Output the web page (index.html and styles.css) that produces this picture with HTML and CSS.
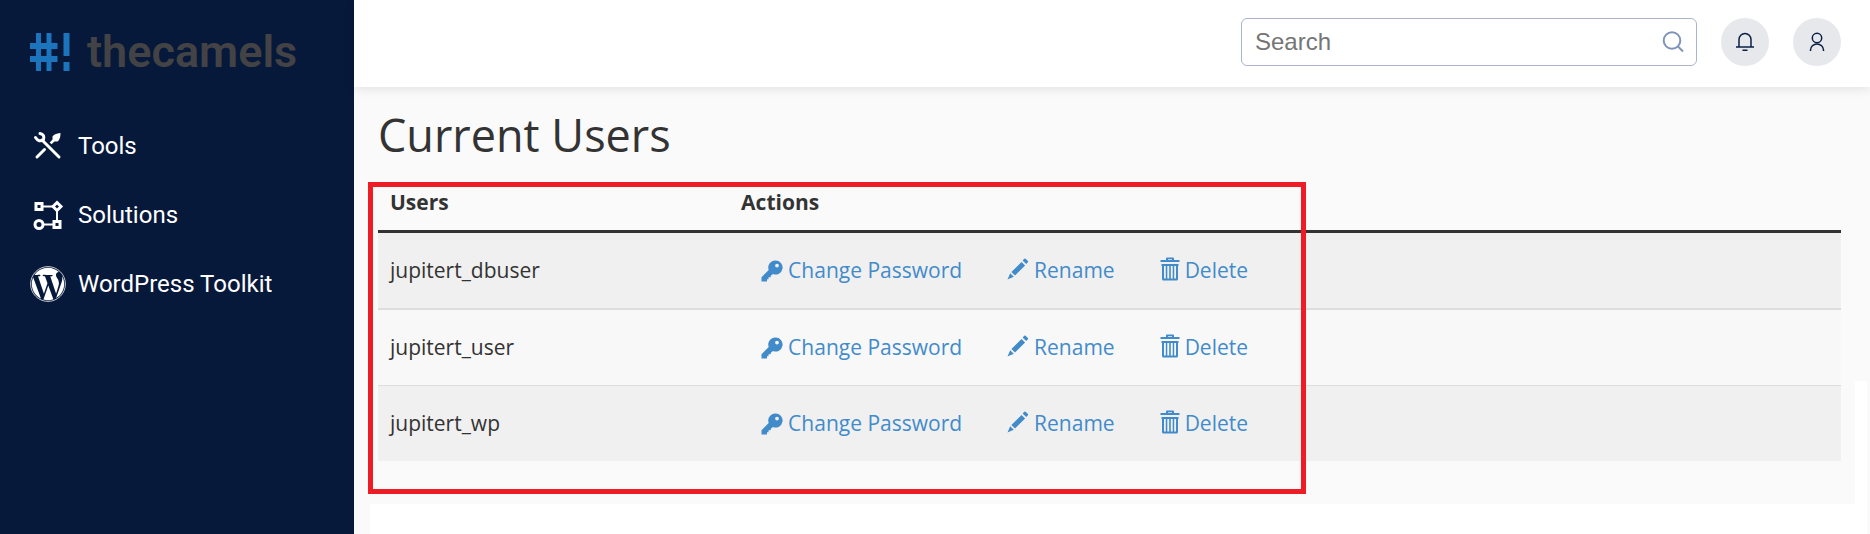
FILE: index.html
```html
<!DOCTYPE html>
<html lang="en">
<head>
<meta charset="utf-8">
<title>Current Users</title>
<link rel="stylesheet" href="styles.css">
</head>
<body>
<svg class="sprite" aria-hidden="true">
  <symbol id="key" viewBox="0 0 22 22">
    <path fill-rule="evenodd" d="M14.500 .5a7 7 0 1 1-2.500 13.500l-2 1.500-.5 1.800H7.500v2H6v2.200H.5v-4.300L7.700 10a7 7 0 0 1 6.800-9.500zM16 3.700a1.900 1.900 0 1 0 0 3.800a1.900 1.900 0 0 0 0-3.800z"/>
  </symbol>
  <symbol id="pencil" viewBox="0 0 22 22">
    <path d="M17.300.8q.7-.5 1.300 0l2.300 2.300q.5.600 0 1.200l-1.700 1.700-3.600-3.600zM14.500 3.900l3.600 3.600L8 17.600l-3.600-3.600zM3.200 15.200l3.600 3.600L.5 21.500z"/>
  </symbol>
  <symbol id="trash" viewBox="0 0 20 24">
    <path fill-rule="evenodd" d="M6 3V1.500Q6 .5 7 .5h6q1 0 1 1V3h5.500v2H.5V3zM8 3h4v-.800H8zM1.500 7h17v2H18v13q0 1.500-1.500 1.500h-13Q2 23.500 2 22V9h-.5zM4 9v12.500h1.800V9zm3.300 0v12.500h1.900V9zm3.500 0v12.500h1.900V9zm3.400 0v12.500H16V9z"/>
  </symbol>
</svg>
<div class="app">
  <aside class="sidebar">
    <a class="brand" href="#" aria-label="thecamels">
      <svg class="brand-mark" viewBox="0 0 40 38" aria-hidden="true"><path d="M6 0h5v38H6zM16.500 0h5v38h-5zM0 10h27.500v6H0zM0 23h27.500v6H0zM33.500 0h6v23h-6zM33.500 29h6v9h-6z"/></svg>
      <span class="brand-name">thecamels</span>
    </a>
    <nav class="menu">
      <a class="menu-item" href="#">
        <svg class="menu-icon" viewBox="0 0 36 36" aria-hidden="true">
          <path d="M12 12L29 29" stroke="#fff" stroke-width="3" stroke-linecap="round"/>
          <path d="M14.500 21.500L7 29" stroke="#fff" stroke-width="3" stroke-linecap="round"/>
          <path d="M10 5.500Q15 6.500 13.500 11.500Q9 15 5.500 9.500" fill="none" stroke="#fff" stroke-width="3" stroke-linecap="round"/>
          <path d="M30.500 5Q24 5.500 22.500 8.500v3l-2.800 3 1.800 1.800 3-2.800h3Q30.500 11.500 30.500 5z" fill="#fff"/>
        </svg>
        <span>Tools</span>
      </a>
      <a class="menu-item" href="#">
        <svg class="menu-icon" viewBox="0 0 36 36" fill="none" stroke="#fff" stroke-width="3" aria-hidden="true">
          <path d="M13 9.500h10M27 13v10M14 27.500h9" stroke-width="2"/>
          <path d="M6 6.500h6v6H6zM24 24.500h6v6h-6zM27 5.500l4 4-4 4-4-4z"/>
          <circle cx="9" cy="27.500" r="4"/>
        </svg>
        <span>Solutions</span>
      </a>
      <a class="menu-item" href="#">
        <svg class="menu-icon" viewBox="0 0 24 24" fill="#fff" aria-hidden="true">
          <circle cx="12" cy="12" r="11.600" fill="none" stroke="#fff" stroke-width=".5"/>
          <path d="M21.469 6.825c.84 1.537 1.318 3.300 1.318 5.175 0 3.979-2.156 7.456-5.363 9.325l3.295-9.527c.615-1.540.820-2.771.820-3.864 0-.405-.026-.780-.070-1.110m-7.981.105c.647-.030 1.232-.105 1.232-.105.582-.075.514-.930-.067-.899 0 0-1.755.135-2.880.135-1.064 0-2.850-.150-2.850-.150-.585-.030-.661.855-.075.885 0 0 .540.061 1.125.090l1.680 4.605-2.370 7.080L5.354 6.900c.649-.030 1.234-.100 1.234-.100.585-.075.516-.930-.065-.896 0 0-1.746.138-2.874.138-.200 0-.438-.008-.690-.015C4.911 3.150 8.235 1.215 12 1.215c2.809 0 5.365 1.072 7.286 2.833-.046-.003-.091-.009-.141-.009-1.060 0-1.812.923-1.812 1.914 0 .890.513 1.643 1.060 2.531.411.720.890 1.643.890 2.977 0 .915-.354 1.994-.821 3.479l-1.075 3.585-3.900-11.610zM12 22.784c-1.059 0-2.081-.153-3.048-.437l3.237-9.406 3.315 9.087c.024.053.050.101.078.149-1.120.393-2.325.609-3.582.609M1.211 12c0-1.564.336-3.050.935-4.390L7.290 21.709C3.694 19.960 1.212 16.271 1.211 12"/>
        </svg>
        <span>WordPress Toolkit</span>
      </a>
    </nav>
  </aside>
  <div class="page">
    <header class="topbar">
      <form class="search" role="search">
        <input class="search-input" type="search" placeholder="Search" aria-label="Search">
        <button class="search-button" type="submit" aria-label="Search">
          <svg class="search-icon" viewBox="0 0 22 22" aria-hidden="true"><circle cx="10" cy="9.500" r="8.300"/><path d="M16 15.500l5 5"/></svg>
        </button>
      </form>
      <button class="round-button" type="button" aria-label="Notifications">
        <svg class="round-icon" viewBox="0 0 20 20" aria-hidden="true"><path d="M4 15V7.500a6 6 0 0 1 12 0V15M1 15h18M7.500 18.300h5"/></svg>
      </button>
      <button class="round-button" type="button" aria-label="Account">
        <svg class="round-icon" viewBox="0 0 20 20" aria-hidden="true"><circle cx="10" cy="6" r="4.700"/><path d="M3.500 19v-1a6.500 6 0 0 1 13 0v1"/></svg>
      </button>
    </header>
    <main class="content">
      <h1 class="title">Current Users</h1>
      <div class="users">
        <table class="users-table">
          <thead>
            <tr><th class="col-user" scope="col">Users</th><th scope="col">Actions</th></tr>
          </thead>
          <tbody>
            <tr>
              <td>jupitert_dbuser</td>
              <td><div class="actions">
                <a class="action" href="#"><svg class="icon-key"><use href="#key"/></svg>Change Password</a>
                <a class="action" href="#"><svg class="icon-pencil"><use href="#pencil"/></svg>Rename</a>
                <a class="action" href="#"><svg class="icon-trash"><use href="#trash"/></svg>Delete</a>
              </div></td>
            </tr>
            <tr>
              <td>jupitert_user</td>
              <td><div class="actions">
                <a class="action" href="#"><svg class="icon-key"><use href="#key"/></svg>Change Password</a>
                <a class="action" href="#"><svg class="icon-pencil"><use href="#pencil"/></svg>Rename</a>
                <a class="action" href="#"><svg class="icon-trash"><use href="#trash"/></svg>Delete</a>
              </div></td>
            </tr>
            <tr>
              <td>jupitert_wp</td>
              <td><div class="actions">
                <a class="action" href="#"><svg class="icon-key"><use href="#key"/></svg>Change Password</a>
                <a class="action" href="#"><svg class="icon-pencil"><use href="#pencil"/></svg>Rename</a>
                <a class="action" href="#"><svg class="icon-trash"><use href="#trash"/></svg>Delete</a>
              </div></td>
            </tr>
          </tbody>
        </table>
        <div class="highlight"></div>
      </div>
    </main>
    <div class="blank"></div>
  </div>
</div>
</body>
</html>
```

FILE: styles.css
```css
* { box-sizing: border-box; }

body {
  margin: 0;
  background: #fafafa;
  color: #333;
  font: 400 21px/31px "Open Sans", "Noto Sans", sans-serif;
}

.sprite { position: absolute; width: 0; height: 0; }

.app { display: flex; min-height: 100vh; }

/* Sidebar */
.sidebar {
  flex: none;
  width: 354px;
  padding: 27px 30px;
  background: #06193b;
  font-family: Roboto, sans-serif;
}

.brand {
  display: flex;
  align-items: center;
  gap: 17px;
  height: 50px;
  color: #434345;
  text-decoration: none;
}
.brand-mark { width: 40px; height: 38px; fill: #1c75bc; }
.brand-name { font-size: 45px; font-weight: 600; line-height: 50px; }

.menu { display: grid; gap: 33px; margin-top: 51px; }
.menu-item {
  display: flex;
  align-items: center;
  gap: 12px;
  color: #fff;
  font-size: 24px;
  font-weight: 400;
  line-height: 36px;
  text-decoration: none;
}
.menu-icon { width: 36px; height: 36px; }

/* Top bar */
.page { display: flex; flex: 1; flex-direction: column; min-width: 0; }

.topbar {
  display: flex;
  justify-content: flex-end;
  gap: 24px;
  padding: 18px 29px 21px;
  background: #fff;
  box-shadow: 0 2px 10px rgba(0, 0, 0, 0.1);
}
.search {
  display: flex;
  align-items: center;
  width: 456px;
  height: 48px;
  border: 1px solid #aab4cc;
  border-radius: 6px;
  background: #fff;
}
.search-input {
  flex: 1;
  min-width: 0;
  padding: 0 13px;
  border: 0;
  background: none;
  font: 400 24px/30px "Liberation Sans", Arial, sans-serif;
  outline: none;
}
.search-input::placeholder { color: #757575; }
.search-button { display: flex; padding: 0 12px; border: 0; background: none; }
.search-icon { width: 22px; height: 22px; fill: none; stroke: #7f94b8; stroke-width: 2; }
.round-button {
  display: flex;
  align-items: center;
  justify-content: center;
  width: 48px;
  height: 48px;
  padding: 0;
  border: 0;
  border-radius: 50%;
  background: #e6e8ec;
}
.round-icon { width: 20px; height: 20px; fill: none; stroke: #0b1f45; stroke-width: 1.5; }

/* Content */
.content { position: relative; padding: 18px 29px 43px 24px; }
.content::after {
  content: "";
  position: absolute;
  right: 3px;
  bottom: 0;
  width: 12px;
  height: 123px;
  background: #fff;
}
.title { margin: 0 0 10px; font-size: 45px; font-weight: 400; line-height: 60px; }

.users { position: relative; }
.users-table { width: 100%; border-collapse: separate; border-spacing: 0; }
.users-table th { padding: 12px; border-bottom: 3px solid #333; font-weight: 700; text-align: left; }
.users-table td { padding: 22px 12px; border-bottom: 1px solid #ddd; background: #f8f8f8; }
.users-table tr:nth-child(odd) td { background: #f0f0f0; }
.users-table tbody tr:first-child td { border-bottom-width: 2px; }
.users-table tbody tr:last-child td { border-bottom: 0; }
.col-user { width: 24%; }

.actions { display: flex; gap: 45px; padding-left: 20px; }
.action {
  display: flex;
  align-items: center;
  gap: 5px;
  color: #428bca;
  text-decoration: none;
}
.action svg { fill: currentColor; }
.icon-key, .icon-pencil { width: 22px; height: 22px; }
.icon-pencil { margin-bottom: 3px; }
.icon-trash { width: 20px; height: 24px; margin-bottom: 4px; }

.highlight {
  position: absolute;
  top: 7px;
  bottom: -33px;
  left: -10px;
  width: 938px;
  border: 5px solid #ee1c25;
  pointer-events: none;
}

.blank { flex: 1; margin: 0 3px 0 16px; background: #fff; }
```
